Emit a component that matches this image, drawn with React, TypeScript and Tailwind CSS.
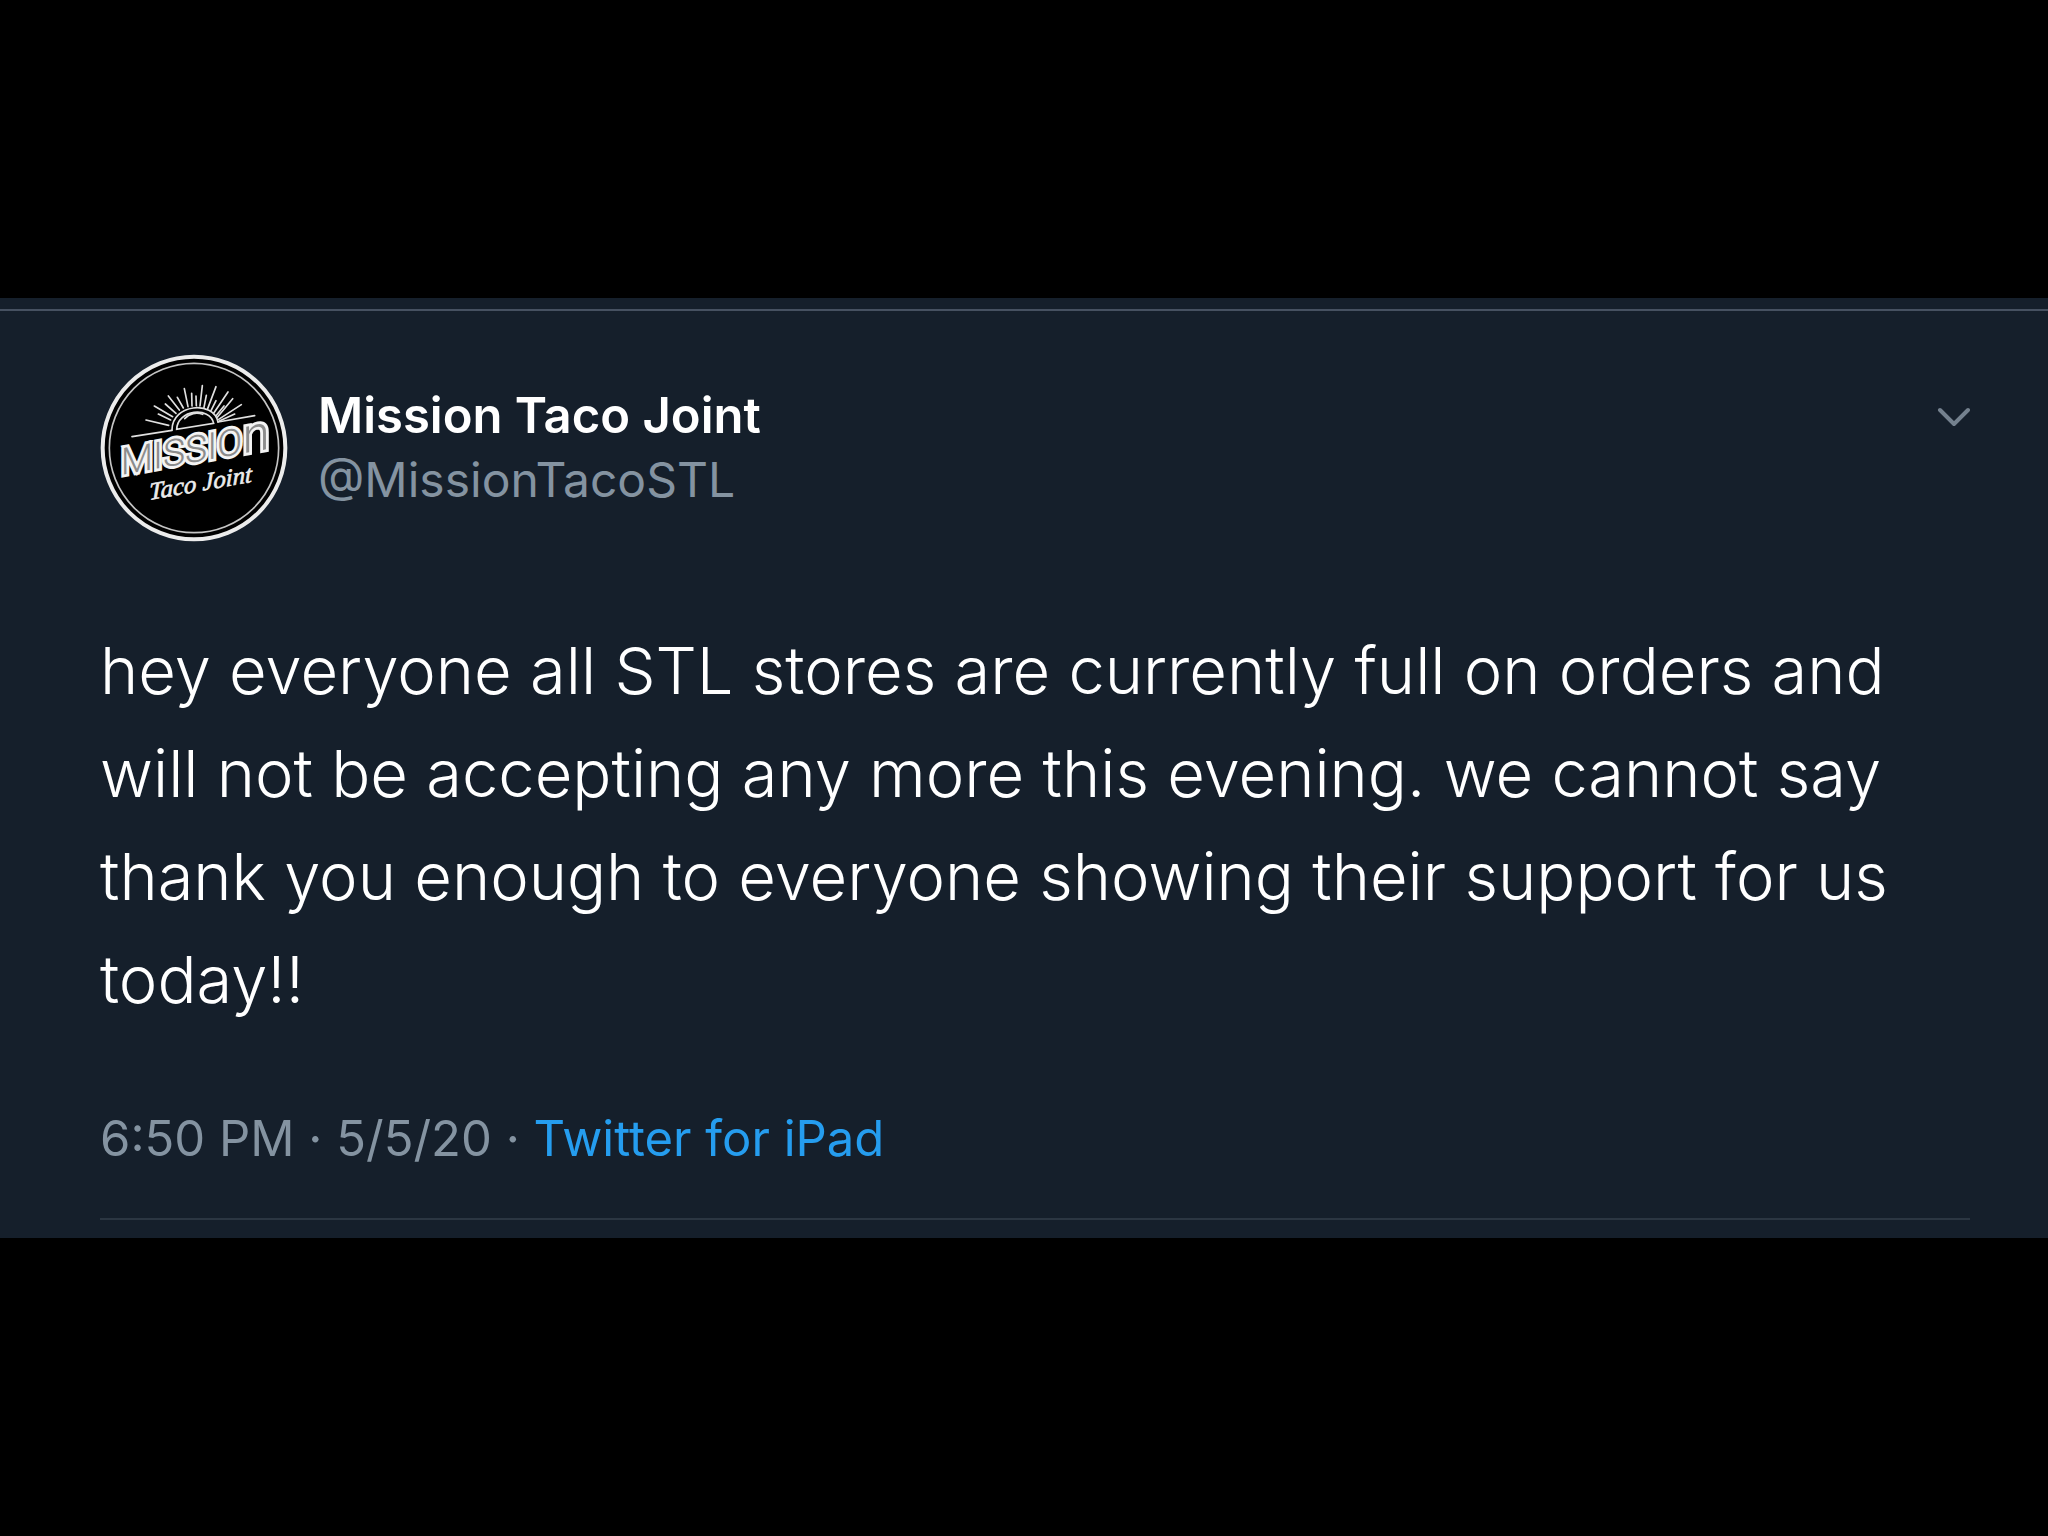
const tweet = {
  name: "Mission Taco Joint",
  handle: "@MissionTacoSTL",
  text: "hey everyone all STL stores are currently full on orders and will not be accepting any more this evening. we cannot say thank you enough to everyone showing their support for us today!!",
  time: "6:50 PM",
  date: "5/5/20",
  source: "Twitter for iPad",
};

// [x1, y1, x2, y2] for each ray of the sunrise
const rays = [
  [236, 256, 168, 240],
  [242, 240, 205, 222],
  [248, 230, 193, 198],
  [258, 220, 226, 192],
  [268, 210, 235, 168],
  [280, 204, 262, 172],
  [294, 200, 283, 146],
  [306, 198, 305, 160],
  [319, 197, 318, 168],
  [330, 198, 337, 137],
  [342, 202, 349, 166],
  [353, 206, 378, 140],
  [363, 212, 378, 182],
  [371, 220, 414, 156],
  [378, 227, 402, 198],
  [382, 232, 428, 176],
  [386, 238, 454, 194],
  [388, 243, 434, 222],
];

function Logo() {
  return (
    <svg
      viewBox="30 42 564 564"
      className="size-[188px] shrink-0"
      role="img"
      aria-label="Mission Taco Joint logo"
    >
      <circle cx="312" cy="324" r="274" fill="#000" stroke="#ececec" strokeWidth="12" />
      <circle cx="312" cy="324" r="254" fill="none" stroke="#c4c4c4" strokeWidth="5" />
      <g stroke="#e0e0e0" strokeWidth="5" strokeLinecap="round" fill="none">
        {rays.map(([x1, y1, x2, y2]) => (
          <line key={`${x2}-${y2}`} x1={x1} y1={y1} x2={x2} y2={y2} />
        ))}
        <path d="M126 290 L246 271" />
        <path d="M384 246 L494 227" />
        <path d="M246 270 C246 192 370 180 384 246" />
        <path d="M260 268 C262 208 360 198 371 250 Z" />
        <path d="M284 236 C298 220 320 216 338 223" />
      </g>
      {/* thick light lettering with a thin darker inline on top */}
      <g
        transform="translate(92 405) skewY(-10)"
        fontFamily="Roboto, sans-serif"
        fontSize="112"
        fontWeight="300"
      >
        <text fill="#f4f4f4" stroke="#f4f4f4" strokeWidth="17">
          MISSIO<tspan fontSize="148">n</tspan>
        </text>
        <text fill="#8c8c8c" aria-hidden="true">
          MISSIO<tspan fontSize="148">n</tspan>
        </text>
      </g>
      <text
        transform="translate(178 480) skewY(-10)"
        fontFamily="'Liberation Serif', serif"
        fontSize="74"
        fontStyle="italic"
        fill="#ececec"
        stroke="#ececec"
        strokeWidth="2"
      >
        Taco Joint
      </text>
    </svg>
  );
}

export default function App() {
  return (
    <div className="flex min-h-screen flex-col justify-center bg-black font-['Inter',sans-serif]">
      <article className="bg-[#151f2b] pt-[11px] pb-[18px]">
        <div className="border-t-2 border-[#465161] pt-[43px] pr-[78px] pl-[100px]">
          <header className="flex items-start gap-[30px]">
            <Logo />
            <div className="flex-1 pt-[30px]">
              <h1 className="text-[49px] leading-[64px] font-semibold text-white">{tweet.name}</h1>
              <p className="text-[48px] leading-[64px] text-[#8493a1]">{tweet.handle}</p>
            </div>
            <button type="button" aria-label="More" className="mt-[50px] text-[#74818e]">
              <svg viewBox="0 0 34 26" className="h-[26px] w-[34px]" fill="none">
                <path
                  d="M4 6 L18 20 L32 6"
                  stroke="currentColor"
                  strokeWidth="4"
                  strokeLinecap="round"
                  strokeLinejoin="round"
                />
              </svg>
            </button>
          </header>

          <p className="mt-[77px] text-[65px] leading-[103px] font-light text-white">
            {tweet.text}
          </p>

          <p className="mt-[76px] border-b-2 border-[#2b3642] pb-[47px] text-[49px] leading-[64px] text-[#8493a1]">
            {tweet.time} · {tweet.date} ·{" "}
            <a href="#source" className="text-[#259def]">
              {tweet.source}
            </a>
          </p>
        </div>
      </article>
    </div>
  );
}
